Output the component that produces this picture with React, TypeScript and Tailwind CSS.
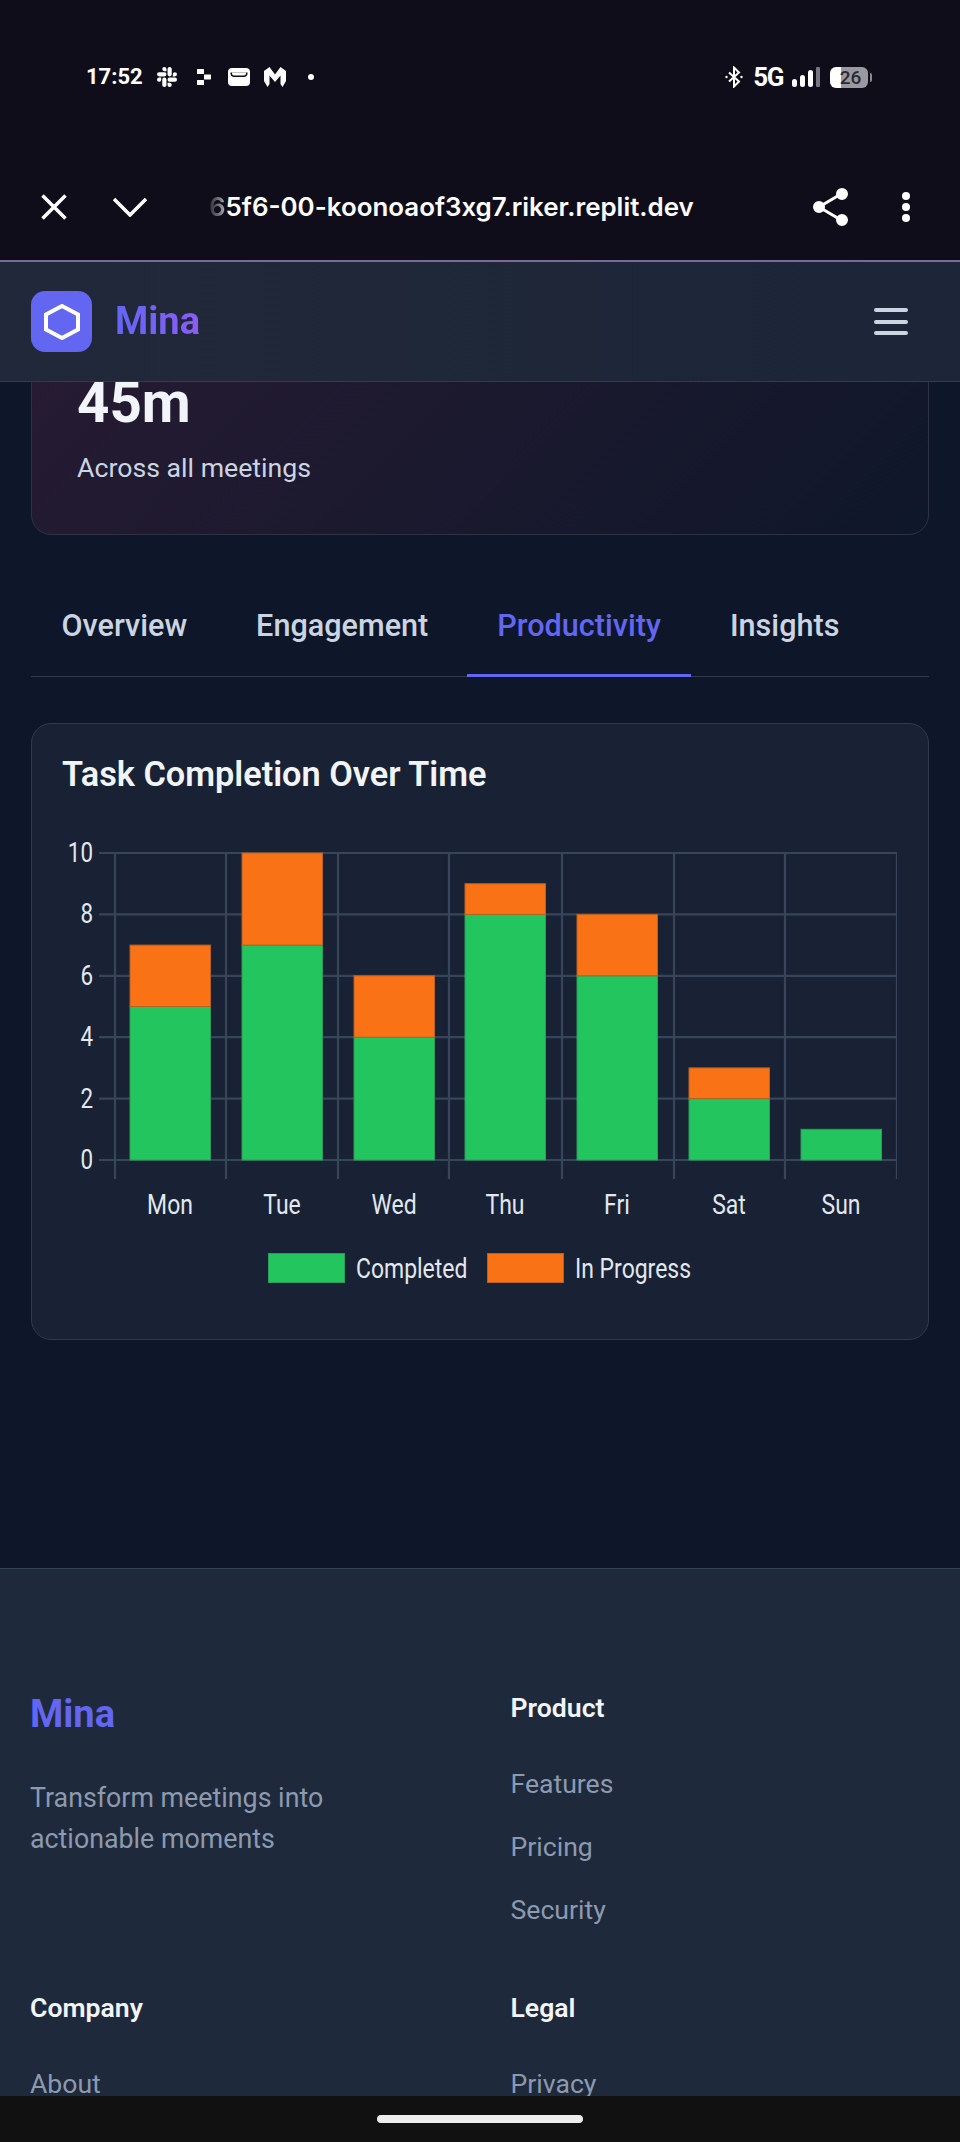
import { SiSlack } from "react-icons/si";

const days = ["Mon", "Tue", "Wed", "Thu", "Fri", "Sat", "Sun"];
const completed = [5, 7, 4, 8, 6, 2, 1];
const inProgress = [2, 3, 2, 1, 2, 1, 0];
const barLeft = [130, 242, 354, 465, 577, 689, 801];
const gridX = [115, 226, 338, 449, 562, 674, 785, 897];
const ticks = [0, 2, 4, 6, 8, 10];
const baseY = 1161;
const unit = 30.7;

function StatusBar() {
  return (
    <div className="flex h-[22px] items-center pl-[86px] pr-[88px] text-white">
      <span className="w-[56px] text-[22px] leading-[22px] font-bold font-['Roboto',sans-serif]">17:52</span>
      <SiSlack className="ml-[15px] h-[20px] w-[20px]" />
      <svg className="ml-[20px] h-[16px] w-[14px]" viewBox="0 0 14 16" fill="white">
        <rect x="0" y="0" width="7" height="5" rx="0.5" />
        <rect x="7" y="5.5" width="7" height="5" rx="0.5" />
        <rect x="0" y="11" width="7" height="5" rx="0.5" />
      </svg>
      <svg className="ml-[17px] h-[18px] w-[22px]" viewBox="0 0 22 18">
        <rect x="0" y="0" width="22" height="18" rx="4" fill="white" />
        <path d="M2.5 4.5h17v1c0 2-1.5 3.5-3.5 3.5H6C4 9 2.5 7.5 2.5 5.5z" fill="#100d1b" />
        <path d="M4 4.5h14v1c0 1.2-1 2-2 2H6c-1 0-2-.8-2-2z" fill="white" />
      </svg>
      <svg className="ml-[14px] h-[20px] w-[22px]" viewBox="0 0 22 20" fill="white">
        <path d="M0 4 5.5 0 11 7.5 16.5 0 22 4v10l-3.5 6-2-3V8.5L11 15 5.5 8.5V17l-2 3L0 14z" />
      </svg>
      <span className="ml-[22px] h-[6px] w-[6px] rounded-full bg-white" />
      <div className="flex-1" />
      <svg className="h-[22px] w-[18px]" viewBox="0 0 18 22" fill="none" stroke="white" strokeWidth="2">
        <path d="M4 6.5 14 15.5 9 20.5V1.5l5 5L4 15.5" />
        <circle cx="1.5" cy="11" r="1.2" fill="white" stroke="none" />
        <circle cx="16.5" cy="11" r="1.2" fill="white" stroke="none" />
      </svg>
      <span className="ml-[10px] text-[26px] leading-[22px] font-bold tracking-[-1.5px] font-['Roboto',sans-serif]">5G</span>
      <svg className="ml-[9px] h-[20px] w-[28px]" viewBox="0 0 28 20">
        <rect x="0" y="12" width="5" height="8" rx="2.5" fill="white" />
        <rect x="8" y="8" width="5" height="12" rx="2.5" fill="white" />
        <rect x="16" y="3" width="5" height="17" rx="2.5" fill="white" />
        <rect x="24" y="0" width="4" height="20" rx="1" fill="#77757f" />
      </svg>
      <div className="ml-[10px] flex h-[21px] w-[38px] items-center justify-center rounded-[6px] bg-[linear-gradient(90deg,#ffffff_11px,#9a99a0_11px)] pl-[3px] text-[19px] leading-none font-medium text-[#2b2933] font-['Roboto',sans-serif]">
        26
      </div>
      <span className="ml-[2px] h-[9px] w-[2px] rounded-r-full bg-[#8a8990]" />
    </div>
  );
}

function BrowserBar() {
  return (
    <div className="mt-[99px] flex h-[40px] items-center pl-[41px] text-white">
      <svg className="h-[26px] w-[26px]" viewBox="0 0 26 26" stroke="white" strokeWidth="3.5" fill="none">
        <path d="M1.5 1.5l23 23M24.5 1.5l-23 23" />
      </svg>
      <svg className="ml-[46px] h-[20px] w-[34px]" viewBox="0 0 34 20" stroke="white" strokeWidth="3.5" fill="none">
        <path d="M1 2l16 16L33 2" />
      </svg>
      <div className="ml-[62px] w-[484px] whitespace-nowrap text-[25.9px] leading-[40px] font-semibold font-['Inter',sans-serif]">
        <span className="bg-[linear-gradient(90deg,#2a2833,#b0afb5)] bg-clip-text text-transparent">6</span>
        5f6-00-koonoaof3xg7.riker.replit.dev
      </div>
      <svg className="ml-[120px] h-[40px] w-[36px]" viewBox="0 0 36 40" fill="white" stroke="white" strokeWidth="3">
        <path d="M28 7 6 20l22 13" fill="none" />
        <circle cx="29" cy="7" r="4.5" />
        <circle cx="6" cy="20" r="4.5" />
        <circle cx="29" cy="33" r="4.5" />
      </svg>
      <div className="ml-[53px] flex flex-col gap-[3px]">
        <span className="h-[8px] w-[8px] rounded-full bg-white" />
        <span className="h-[8px] w-[8px] rounded-full bg-white" />
        <span className="h-[8px] w-[8px] rounded-full bg-white" />
      </div>
    </div>
  );
}

function Header() {
  return (
    <header className="flex h-[120px] shrink-0 items-center border-b border-[#333c4e] bg-[linear-gradient(90deg,#212839,#1c2638)] pl-[31px] pr-[52px] font-['Roboto',sans-serif]">
      <div className="flex h-[61px] w-[61px] items-center justify-center rounded-[14px] bg-[#6366f1]">
        <svg className="h-[36px] w-[36px]" viewBox="0 0 36 36" fill="none" stroke="white" strokeWidth="4">
          <path d="M18 2 34 10.5v15L18 34 2 25.5v-15z" />
        </svg>
      </div>
      <span className="ml-[23px] -mt-[2px] bg-[linear-gradient(90deg,#6366f1,#8b5cf6)] bg-clip-text text-[38px] leading-[46px] font-bold text-transparent">
        Mina
      </span>
      <div className="flex-1" />
      <div className="flex w-[34px] flex-col gap-[7.5px]">
        <span className="h-[4px] rounded-full bg-[#cbd5e1]" />
        <span className="h-[4px] rounded-full bg-[#cbd5e1]" />
        <span className="h-[4px] rounded-full bg-[#cbd5e1]" />
      </div>
    </header>
  );
}

function Tabs() {
  const tabs = ["Overview", "Engagement", "Productivity", "Insights"];
  return (
    <div className="mt-[32px] flex h-[110px] gap-[8px] border-b border-[#2f3b4d]">
      {tabs.map((tab) => (
        <div
          key={tab}
          className={
            tab === "Productivity"
              ? "-mb-px border-b-[3px] border-[#6366f1] px-[30.5px] pt-[37px] text-[30.6px] leading-[44px] font-medium text-[#6366f1]"
              : "px-[30.5px] pt-[37px] text-[30.6px] leading-[44px] font-medium text-[#cbd5e1]"
          }
        >
          {tab}
        </div>
      ))}
    </div>
  );
}

function Chart() {
  return (
    <svg className="mt-[43px] block h-[460px] w-[834px]" viewBox="63 840 834 460" fontFamily="Roboto, sans-serif" fill="#e2e8f0">
      {ticks.map((t) => (
        <g key={t}>
          <line x1="99" x2="897" y1={baseY - t * unit} y2={baseY - t * unit} stroke="#36455a" strokeWidth="2.2" />
          <text transform={`translate(93 ${baseY - t * unit + 9}) scale(0.8 1)`} textAnchor="end" fontSize="28">
            {t}
          </text>
        </g>
      ))}
      {gridX.map((x) => (
        <line key={x} x1={x} x2={x} y1="853" y2="1180" stroke="#36455a" strokeWidth="2.2" />
      ))}
      {days.map((day, i) => {
        const greenTop = baseY - completed[i] * unit;
        const orangeH = inProgress[i] * unit;
        return (
          <g key={day}>
            <rect x={barLeft[i]} y={greenTop} width="80.5" height={completed[i] * unit} fill="#22c55e" stroke="#2b9d5b" strokeWidth="1" />
            {orangeH > 0 && (
              <rect x={barLeft[i]} y={greenTop - orangeH} width="80.5" height={orangeH} fill="#f97316" stroke="#b9601f" strokeWidth="1" />
            )}
            <text transform={`translate(${barLeft[i] + 40} 1215) scale(0.82 1)`} textAnchor="middle" fontSize="28">
              {day}
            </text>
          </g>
        );
      })}
      <rect x="268.5" y="1254.5" width="76" height="29" fill="#22c55e" stroke="#2b9d5b" />
      <text transform="translate(356 1279) scale(0.82 1)" fontSize="28">
        Completed
      </text>
      <rect x="487.5" y="1254.5" width="76" height="29" fill="#f97316" stroke="#b9601f" />
      <text transform="translate(575 1279) scale(0.82 1)" fontSize="28">
        In Progress
      </text>
    </svg>
  );
}

function FooterColumn({ title, links }: { title: string; links: string[] }) {
  return (
    <div>
      <h4 className="text-[26.6px] leading-[32px] font-semibold text-[#f1f5f9]">{title}</h4>
      <ul className="mt-[44px] flex flex-col gap-[31px]">
        {links.map((link) => (
          <li key={link} className="text-[26.6px] leading-[32px] text-[#8c9ab0]">
            {link}
          </li>
        ))}
      </ul>
    </div>
  );
}

function Footer() {
  return (
    <footer className="h-[528px] shrink-0 overflow-hidden border-t border-[#334155] bg-[#1e293b] pl-[30px] pr-[31px] pt-[123px] font-['Roboto',sans-serif]">
      <div className="grid grid-cols-2 gap-x-[62px] gap-y-[66px]">
        <div>
          <div className="text-[38px] leading-[44px] font-bold text-[#6366f1]">Mina</div>
          <p className="mt-[42px] text-[26.8px] leading-[41px] text-[#8c9ab0]">
            Transform meetings into
            <br />
            actionable moments
          </p>
        </div>
        <FooterColumn title="Product" links={["Features", "Pricing", "Security"]} />
        <FooterColumn title="Company" links={["About", "Blog", "Careers"]} />
        <FooterColumn title="Legal" links={["Privacy", "Terms"]} />
      </div>
    </footer>
  );
}

export default function App() {
  return (
    <div className="flex h-[2142px] w-[960px] flex-col overflow-hidden bg-[#0e172a]">
      <div className="h-[260px] shrink-0 bg-[#100d1b] pt-[66px]">
        <StatusBar />
        <BrowserBar />
      </div>
      <div className="h-[2px] shrink-0 bg-[#7a6a9a]" />
      <Header />
      <main className="min-h-0 flex-1 overflow-hidden px-[31px] font-['Roboto',sans-serif]">
        <div className="-mt-[60px] h-[213px] rounded-[20px] border border-[#2f3244] bg-[linear-gradient(135deg,#271b33,#0f172a)] pl-[45px] pt-[45px]">
          <div className="text-[56.5px] leading-[70px] font-bold text-[#f1f5f9]">45m</div>
          <div className="mt-[10px] text-[26.7px] leading-[40px] text-[#cbd5e1]">Across all meetings</div>
        </div>
        <Tabs />
        <section className="mt-[46px] h-[617px] rounded-[20px] border border-[#2f3a4c] bg-[#192234] pl-[31px] pt-[28px]">
          <h3 className="-ml-px text-[34.3px] leading-[44px] font-semibold text-[#f1f5f9]">Task Completion Over Time</h3>
          <Chart />
        </section>
      </main>
      <Footer />
      <div className="flex h-[46px] shrink-0 justify-center bg-[#111111] pt-[19px]">
        <span className="h-[8px] w-[206px] rounded-full bg-[#eeeeee]" />
      </div>
    </div>
  );
}
